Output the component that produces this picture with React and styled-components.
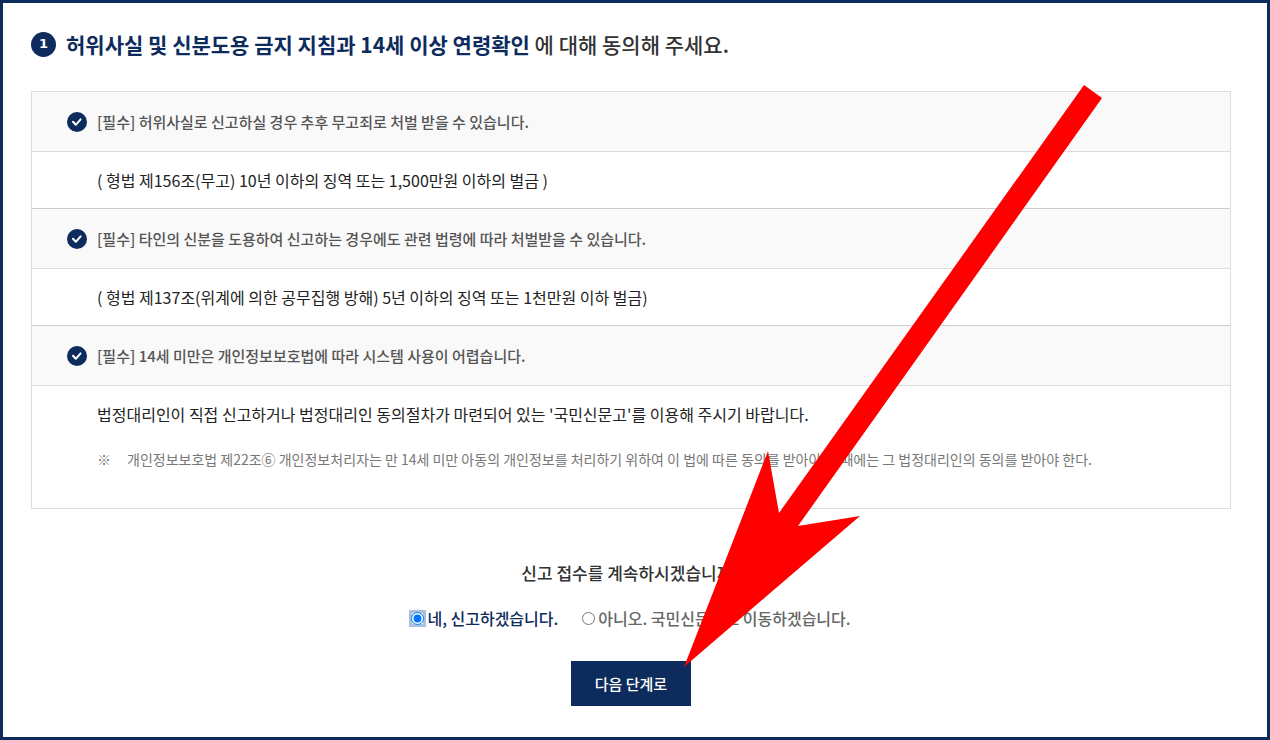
import React, { useState } from "react";
import styled, { createGlobalStyle } from "styled-components";

// terms that the reporter has to agree with
const TERMS = [
  {
    id: "false-report",
    title: "[필수] 허위사실로 신고하실 경우 추후 무고죄로 처벌 받을 수 있습니다.",
    desc: "( 형법 제156조(무고) 10년 이하의 징역 또는 1,500만원 이하의 벌금 )"
  },
  {
    id: "identity",
    title:
      "[필수] 타인의 신분을 도용하여 신고하는 경우에도 관련 법령에 따라 처벌받을 수 있습니다.",
    desc: "( 형법 제137조(위계에 의한 공무집행 방해) 5년 이하의 징역 또는 1천만원 이하 벌금)"
  },
  {
    id: "age",
    title: "[필수] 14세 미만은 개인정보보호법에 따라 시스템 사용이 어렵습니다.",
    desc:
      "법정대리인이 직접 신고하거나 법정대리인 동의절차가 마련되어 있는 '국민신문고'를 이용해 주시기 바랍니다.",
    note:
      "개인정보보호법 제22조⑥ 개인정보처리자는 만 14세 미만 아동의 개인정보를 처리하기 위하여 이 법에 따른 동의를 받아야 할 때에는 그 법정대리인의 동의를 받아야 한다."
  }
];

const ANSWERS = [
  { value: "yes", label: "네, 신고하겠습니다." },
  { value: "no", label: "아니오. 국민신문고로 이동하겠습니다." }
];

const CheckIcon = () => (
  <CHECK viewBox="0 0 20 20" aria-hidden="true">
    <circle cx="10" cy="10" r="10" fill="#0d2b5c" />
    <path
      d="M6 9.8l2.8 3 4.8-5.4"
      fill="none"
      stroke="#fff"
      strokeWidth="2"
      strokeLinecap="round"
      strokeLinejoin="round"
    />
  </CHECK>
);

// one term : gray title bar and the description under it
const TermItem = ({ term }) => (
  <TERM>
    <TERMTITLE>
      <CheckIcon />
      {term.title}
    </TERMTITLE>
    <TERMBODY $hasNote={!!term.note}>
      <p>{term.desc}</p>
      {term.note && (
        <NOTE>
          <span>※</span>
          <span>{term.note}</span>
        </NOTE>
      )}
    </TERMBODY>
  </TERM>
);

const App = () => {
  const [answer, setAnswer] = useState("yes");

  return (
    <>
      <GlobalStyle />
      <PAGE>
        <TITLE>
          <STEP>1</STEP>
          <span>
            <strong>허위사실 및 신분도용 금지 지침과 14세 이상 연령확인</strong> 에
            대해 동의해 주세요.
          </span>
        </TITLE>
        <TERMLIST>
          {TERMS.map(term => (
            <TermItem key={term.id} term={term} />
          ))}
        </TERMLIST>
        <CONFIRM onSubmit={e => e.preventDefault()}>
          <QUESTION id="question">신고 접수를 계속하시겠습니까?</QUESTION>
          <OPTIONS role="radiogroup" aria-labelledby="question">
            {ANSWERS.map(({ value, label }) => (
              <OPTION key={value} $checked={answer === value}>
                <input
                  type="radio"
                  name="answer"
                  value={value}
                  checked={answer === value}
                  onChange={() => setAnswer(value)}
                />
                {label}
              </OPTION>
            ))}
          </OPTIONS>
          <NEXT type="submit">다음 단계로</NEXT>
        </CONFIRM>
        {/* arrow that points at the next button */}
        <ARROW viewBox="0 0 418 582" aria-hidden="true">
          <path d="M400 0L418 13L114 441L176 431L0 582L84 366L95 428Z" fill="#f00" />
        </ARROW>
      </PAGE>
    </>
  );
};

const GlobalStyle = createGlobalStyle`
  * {
    box-sizing: border-box;
    margin: 0;
  }

  body {
    background: #fff;
    color: #222;
    font-family: "Noto Sans CJK KR", "Noto Sans", sans-serif;
    font-size: 16px;
    line-height: 24px;
  }
`;

const PAGE = styled.main`
  position: relative;
  min-height: 100vh;
  padding: 26px 36px 28px 28px;
  border: 3px solid #0d2b5c;
`;

const TITLE = styled.h1`
  display: flex;
  align-items: center;
  gap: 10px;
  margin-bottom: 32px;
  color: #333;
  font-size: 21px;
  font-weight: 500;
  line-height: 30px;

  strong {
    color: #0d2b5c;
    font-weight: 700;
  }
`;

const STEP = styled.span`
  display: flex;
  flex: none;
  align-items: center;
  justify-content: center;
  width: 25px;
  height: 25px;
  border-radius: 50%;
  background: #0d2b5c;
  color: #fff;
  font-family: "DejaVu Sans", sans-serif;
  font-size: 13px;
  font-weight: 700;
`;

const TERMLIST = styled.ul`
  padding: 0;
  border: 1px solid #ddd;
  list-style: none;
`;

const TERM = styled.li`
  & + & {
    border-top: 1px solid #ccc;
  }
`;

const TERMTITLE = styled.h2`
  display: flex;
  align-items: center;
  gap: 10px;
  min-height: 60px;
  padding: 0 35px;
  border-bottom: 1px solid #ddd;
  background: #f9f9f9;
  color: #555;
  font-size: 15px;
  font-weight: 500;
  line-height: 23px;
`;

const CHECK = styled.svg`
  flex: none;
  width: 20px;
  height: 20px;
`;

const TERMBODY = styled.div`
  padding: 16px 35px ${props => (props.$hasNote ? "37px" : "16px")} 65px;
`;

const NOTE = styled.p`
  display: flex;
  gap: 16px;
  margin-top: 21px;
  color: #777;
  font-size: 14px;
`;

const CONFIRM = styled.form`
  display: flex;
  flex-direction: column;
  align-items: center;
  margin-top: 52px;
`;

const QUESTION = styled.p`
  color: #333;
  font-size: 17px;
  font-weight: 500;
`;

const OPTIONS = styled.div`
  display: flex;
  gap: 24px;
  margin: 21px 0 31px;
`;

const OPTION = styled.label`
  display: flex;
  align-items: center;
  gap: 3px;
  color: ${props => (props.$checked ? "#0d2b5c" : "#666")};
  font-weight: 500;

  input {
    width: 13px;
    height: 13px;
    box-shadow: ${props => (props.$checked ? "0 0 0 2px #a9c1da" : "none")};
    background: ${props => (props.$checked ? "#a9c1da" : "none")};
  }
`;

const NEXT = styled.button`
  height: 45px;
  padding: 0 24px;
  border: 0;
  background: #0d2b5c;
  color: #fff;
  font-family: inherit;
  font-size: 15px;
  font-weight: 500;
  cursor: pointer;
`;

const ARROW = styled.svg`
  position: absolute;
  top: 82px;
  left: 681px;
  width: 418px;
  height: 582px;
  pointer-events: none;
`;

export default App;
